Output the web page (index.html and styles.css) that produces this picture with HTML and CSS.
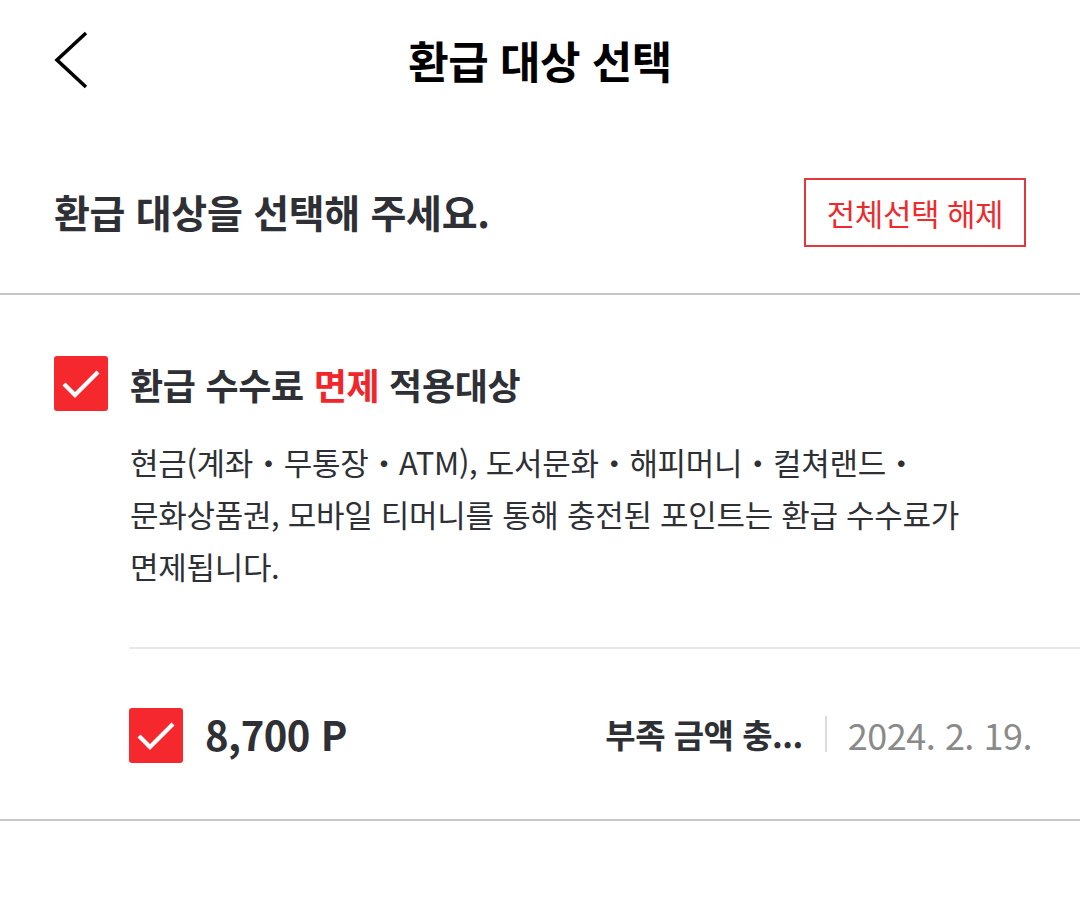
FILE: index.html
```html
<!DOCTYPE html>
<html lang="ko">
<head>
<meta charset="utf-8">
<title>환급 대상 선택</title>
<link rel="stylesheet" href="styles.css">
</head>
<body>
<div class="page">
  <header class="topbar">
    <button class="back" aria-label="뒤로">
      <svg width="40" height="60" viewBox="0 0 40 60"><path d="M36 3 L7 30 L36 57" fill="none" stroke="#000" stroke-width="3.6" stroke-linecap="butt" stroke-linejoin="miter"/></svg>
    </button>
    <h1 class="title">환급 대상 선택</h1>
    <span class="spacer"></span>
  </header>

  <section class="intro">
    <h2 class="intro-text">환급 대상을 선택해 주세요.</h2>
    <button class="deselect">전체선택 해제</button>
  </section>

  <section class="group">
    <div class="group-head">
      <span class="check">
        <svg width="54" height="55" viewBox="0 0 54 55"><path d="M10 28 L21 39 L44 16" fill="none" stroke="#fff" stroke-width="4.2"/></svg>
      </span>
      <h3 class="group-title">환급 수수료 <em>면제</em> 적용대상</h3>
    </div>
    <p class="group-desc">현금(계좌・무통장・ATM), 도서문화・해피머니・컬쳐랜드・문화상품권, 모바일 티머니를 통해 충전된 포인트는 환급 수수료가 면제됩니다.</p>
    <div class="item">
      <span class="check">
        <svg width="54" height="55" viewBox="0 0 54 55"><path d="M10 28 L21 39 L44 16" fill="none" stroke="#fff" stroke-width="4.2"/></svg>
      </span>
      <span class="amount">8,700 P</span>
      <span class="meta">
        <span class="reason">부족 금액 충...</span>
        <span class="sep"></span>
        <span class="date">2024. 2. 19.</span>
      </span>
    </div>
  </section>
</div>
</body>
</html>
```

FILE: styles.css
```css
* { box-sizing: border-box; }
html, body { margin: 0; padding: 0; background: #fff; }
body {
  font-family: "Noto Sans CJK KR", "Noto Sans", sans-serif;
  color: #2e3035;
  width: 1080px;
}
.topbar {
  height: 120px;
  display: grid;
  grid-template-columns: 1fr auto 1fr;
  align-items: center;
  padding: 0 50px;
}
.back {
  border: 0; background: none; padding: 0; margin: 0;
  width: 40px; height: 60px; display: block; justify-self: start;
}
.back svg { display: block; }
.title {
  margin: 0;
  font-size: 44px;
  font-weight: 700;
  color: #000;
  letter-spacing: -0.5px;
  line-height: 1;
}
.intro {
  height: 175px;
  display: flex;
  align-items: center;
  justify-content: space-between;
  padding: 0 54px 0 54px;
  border-bottom: 2px solid #c6c6c6;
}
.intro-text {
  margin: 8px 0 0 0;
  font-size: 39px;
  font-weight: 700;
  color: #2e3035;
  letter-spacing: -0.3px;
}
.deselect {
  font-family: inherit;
  background: #fff;
  border: 2px solid #e3373c;
  color: #ee2a2f;
  font-size: 31px;
  width: 222px;
  height: 69px;
  padding: 0;
  margin-top: 12px;
  letter-spacing: -0.5px;
}
.group {
  padding: 61px 0 0 54px;
  border-bottom: 2px solid #c6c6c6;
}
.group-head {
  display: flex;
  align-items: center;
  gap: 22px;
}
.check {
  width: 54px; height: 55px;
  background: #f5282d;
  border-radius: 3px;
  display: block;
  flex: none;
}
.check svg { display: block; }
.group-title {
  margin: 0;
  font-size: 36px;
  font-weight: 700;
  letter-spacing: -0.3px;
}
.group-title em { font-style: normal; color: #f0262b; }
.group-desc {
  margin: 25px 54px 0 76px;
  font-size: 31px;
  line-height: 52px;
  color: #2e3035;
  letter-spacing: -0.3px;
  word-break: keep-all;
}
.item {
  margin: 55px 0 0 75px;
  border-top: 2px solid #e8e8e8;
  height: 172px;
  display: flex;
  align-items: center;
  padding-right: 48px;
}
.item .check { margin-top: 2px; }
.amount {
  margin-left: 22px;
  font-size: 40px;
  font-weight: 700;
  letter-spacing: -0.5px;
}
.meta {
  margin-left: auto;
  display: flex;
  align-items: center;
}
.reason {
  font-size: 33px;
  font-weight: 700;
  white-space: nowrap;
  letter-spacing: -0.5px;
}
.sep {
  width: 2px; height: 36px; background: #dcdcdc;
  margin: 0 21px 0 22px;
}
.date {
  font-size: 36px;
  color: #8a8a8a;
  letter-spacing: -0.5px;
}
```
